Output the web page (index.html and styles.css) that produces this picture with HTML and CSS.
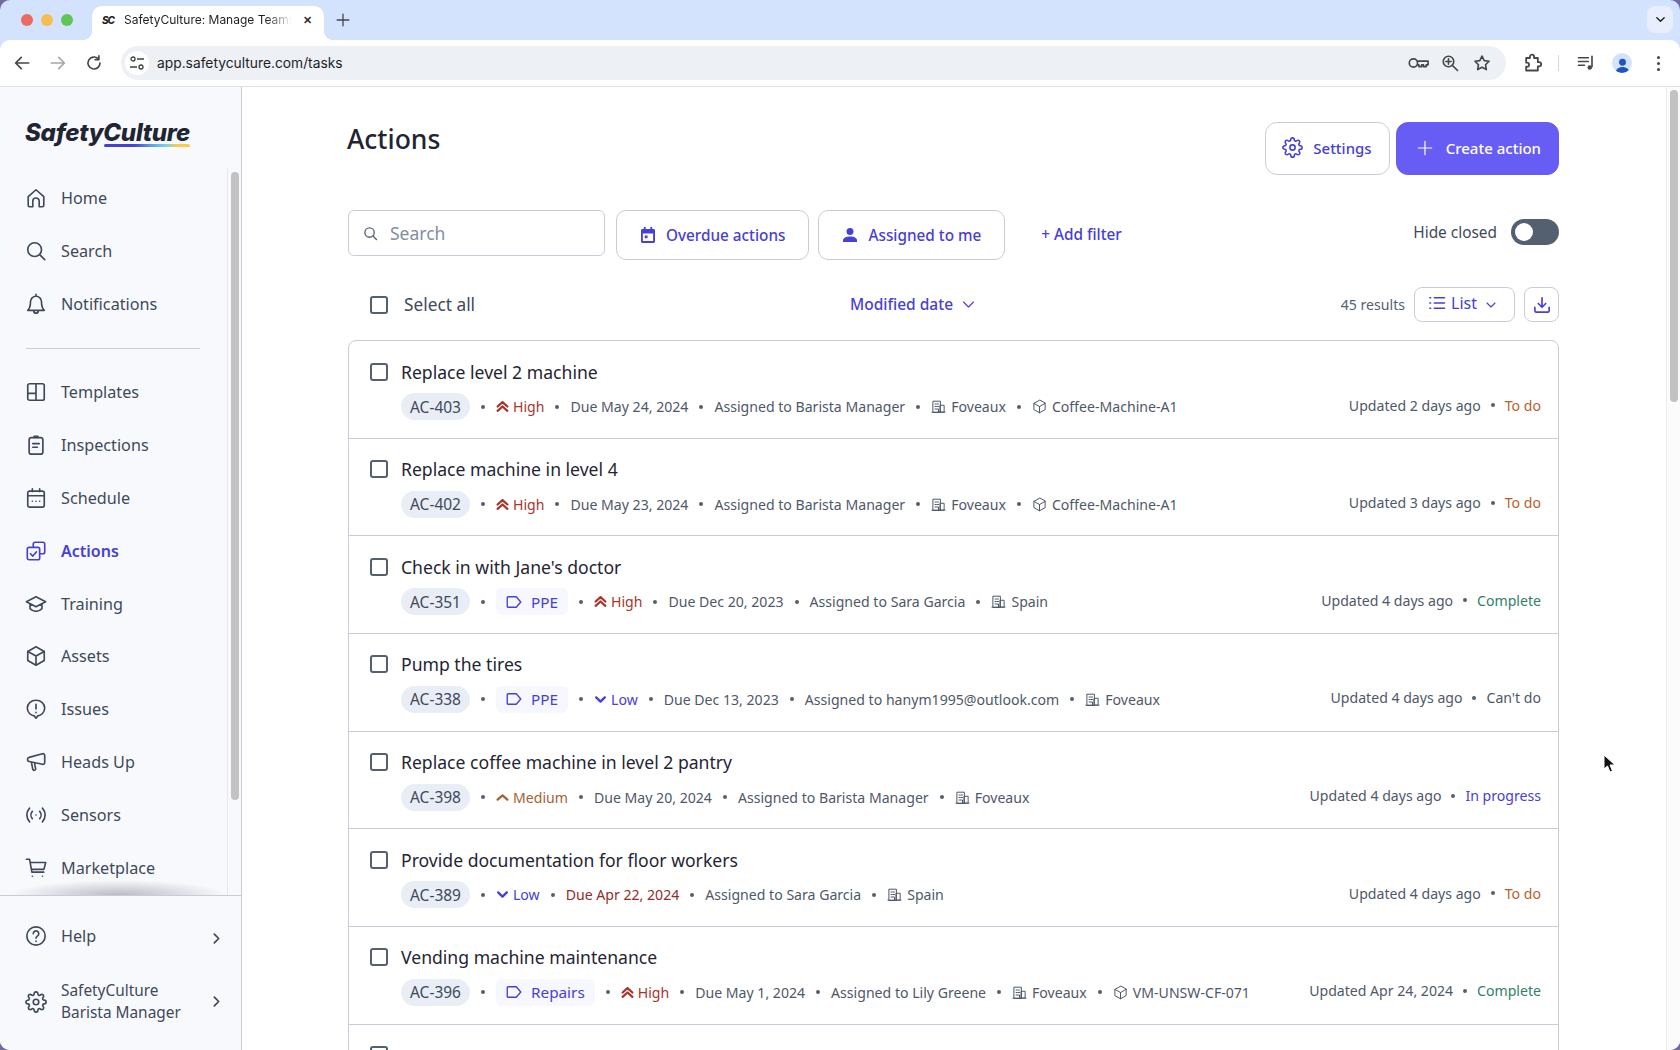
FILE: index.html
```html
<!DOCTYPE html>
<html lang="en">
<head>
    <meta charset="UTF-8">
    <title>SafetyCulture: Manage Teams</title>
    <link rel="stylesheet" href="styles.css">
</head>
<body>

    <!-- Icon sheet -->
    <svg class="sprite" width="0" height="0">
        <symbol id="i-home" viewBox="0 0 24 24"><path d="M3.5 10.5 12 3l8.5 7.5V20a1.5 1.5 0 0 1-1.5 1.5h-3.5v-6a3.5 3.5 0 0 0-7 0v6H5A1.5 1.5 0 0 1 3.5 20z"/></symbol>
        <symbol id="i-search" viewBox="0 0 24 24"><circle cx="10.5" cy="10.5" r="7.5"/><path d="M16 16l5.5 5.5"/></symbol>
        <symbol id="i-bell" viewBox="0 0 24 24"><path d="M12 3.5a6 6 0 0 0-6 6c0 4.5-1 7.5-3 9.5h18c-2-2-3-5-3-9.5a6 6 0 0 0-6-6zM12 1.5v2M9.5 19.5a2.5 2.5 0 0 0 5 0"/></symbol>
        <symbol id="i-templates" viewBox="0 0 24 24"><rect x="3" y="3" width="18" height="18" rx="2"/><path d="M12 3v18M3 13.5h9"/></symbol>
        <symbol id="i-clipboard" viewBox="0 0 24 24"><rect x="4.5" y="4" width="15" height="18" rx="2.5"/><path d="M10 4V2.5h4V4M8.5 10.5h7M8.5 14.5h5"/></symbol>
        <symbol id="i-calendar" viewBox="0 0 24 24"><rect x="3" y="4.5" width="18" height="17.5" rx="2"/><path d="M3 9.5h18M8 2v3M16 2v3M8 15.5h.01M12 15.5h.01M16 15.5h.01"/></symbol>
        <symbol id="i-actions" viewBox="0 0 24 24"><path d="M9 7.5V4.5a2 2 0 0 1 2-2h8.5a2 2 0 0 1 2 2V13a2 2 0 0 1-2 2H16"/><rect x="2.5" y="8" width="13.5" height="13.5" rx="2"/><path d="M6 15l2.5 2.5 4-4.5"/></symbol>
        <symbol id="i-training" viewBox="0 0 24 24"><path d="M12 4 1.5 9.5 12 15l10.5-5.5zM5.5 12v5c2 2 4.5 3 6.5 3s4.5-1 6.5-3v-5"/></symbol>
        <symbol id="i-box" viewBox="0 0 24 24"><path d="M12 2 3 7v10l9 5 9-5V7zM3 7l9 5 9-5M12 12v10"/></symbol>
        <symbol id="i-issue" viewBox="0 0 24 24"><path d="M12 2.5c5.5 0 9.5 3.7 9.5 8.5s-4 8-7.5 8.5L12 22l-2-2.5C6.5 19 2.5 15.8 2.5 11S6.5 2.5 12 2.5zM12 7v5M12 15.5v.5"/></symbol>
        <symbol id="i-megaphone" viewBox="0 0 24 24"><path d="M4.5 7 19 3c1.5-.3 2.5.6 2.5 2v7.5c0 1.4-1 2.3-2.5 2L4.5 11.5A2.3 2.3 0 0 1 4.5 7zM7 12.5l1.5 7.5a1.6 1.6 0 0 0 3.1-.7L10.5 14"/></symbol>
        <symbol id="i-sensor" viewBox="0 0 24 24"><path d="M8 8a6 6 0 0 0 0 8M16 8a6 6 0 0 1 0 8M5 4.5a11 11 0 0 0 0 15M19 4.5a11 11 0 0 1 0 15M12 12h.01"/></symbol>
        <symbol id="i-cart" viewBox="0 0 24 24"><path d="M1.5 2.5H5l2.5 14h13M5.6 6h17l-2 7.5H7M8 21h.01M19 21h.01"/></symbol>
        <symbol id="i-help" viewBox="0 0 24 24"><circle cx="12" cy="12" r="10"/><path d="M9 9.5a3 3 0 1 1 4.5 2.6c-1 .6-1.5 1.2-1.5 2.4M12 17.5v.5"/></symbol>
        <symbol id="i-gear" viewBox="0 0 24 24"><circle cx="12" cy="12" r="3"/><path d="M19.4 15a1.65 1.65 0 0 0 .33 1.82l.06.06a2 2 0 0 1 0 2.83 2 2 0 0 1-2.83 0l-.06-.06a1.65 1.65 0 0 0-1.82-.33 1.65 1.65 0 0 0-1 1.51V21a2 2 0 0 1-2 2 2 2 0 0 1-2-2v-.09A1.65 1.65 0 0 0 9 19.4a1.65 1.65 0 0 0-1.82.33l-.06.06a2 2 0 0 1-2.83 0 2 2 0 0 1 0-2.83l.06-.06a1.65 1.65 0 0 0 .33-1.82 1.65 1.65 0 0 0-1.51-1H3a2 2 0 0 1-2-2 2 2 0 0 1 2-2h.09A1.65 1.65 0 0 0 4.6 9a1.65 1.65 0 0 0-.33-1.82l-.06-.06a2 2 0 0 1 0-2.83 2 2 0 0 1 2.83 0l.06.06a1.65 1.65 0 0 0 1.82.33H9a1.65 1.65 0 0 0 1-1.51V3a2 2 0 0 1 2-2 2 2 0 0 1 2 2v.09a1.65 1.65 0 0 0 1 1.51 1.65 1.65 0 0 0 1.82-.33l.06-.06a2 2 0 0 1 2.83 0 2 2 0 0 1 0 2.83l-.06.06a1.65 1.65 0 0 0-.33 1.82V9a1.65 1.65 0 0 0 1.51 1H21a2 2 0 0 1 2 2 2 2 0 0 1-2 2h-.09a1.65 1.65 0 0 0-1.51 1z"/></symbol>
        <symbol id="i-right" viewBox="0 0 24 24"><path d="M8 4l8 8-8 8"/></symbol>
        <symbol id="i-down" viewBox="0 0 24 24"><path d="M4 8l8 8 8-8"/></symbol>
        <symbol id="i-up" viewBox="0 0 24 24"><path d="M3 16l9-8 9 8"/></symbol>
        <symbol id="i-upup" viewBox="0 0 24 24"><path d="M3 12l9-8 9 8M3 20l9-8 9 8"/></symbol>
        <symbol id="i-tag" viewBox="0 0 24 24"><path d="M3 6.5A1.5 1.5 0 0 1 4.5 5H15l6 7-6 7H4.5A1.5 1.5 0 0 1 3 17.5z"/></symbol>
        <symbol id="i-building" viewBox="0 0 24 24"><path d="M3 21V3.5h12V21zM15 10h6v11h-6zM1.5 21h21M6.5 8h2M10 8h2M6.5 12h2M10 12h2M6.5 16h5.5v5"/></symbol>
        <symbol id="i-list" viewBox="0 0 24 24"><path d="M8.5 5H22M8.5 12H22M8.5 19H22M2.5 5h1M2.5 12h1M2.5 19h1"/></symbol>
        <symbol id="i-download" viewBox="0 0 24 24"><path d="M12 2.5v12M7 10l5 5 5-5M2.5 15v4.5a2 2 0 0 0 2 2h15a2 2 0 0 0 2-2V15"/></symbol>
        <symbol id="i-plus" viewBox="0 0 24 24"><path d="M12 2v20M2 12h20"/></symbol>
        <symbol id="i-back" viewBox="0 0 24 24"><path d="M21 12H4M11 4.5 3.5 12l7.5 7.5"/></symbol>
        <symbol id="i-forward" viewBox="0 0 24 24"><path d="M3 12h17M13 4.5l7.5 7.5-7.5 7.5"/></symbol>
        <symbol id="i-reload" viewBox="0 0 24 24"><path d="M20 12a8 8 0 1 1-2.5-5.8M18.5 2.5v5h-5"/></symbol>
        <symbol id="i-key" viewBox="0 0 24 24"><circle cx="7" cy="12" r="4.5"/><path d="M11.5 10H23v4h-2v2h-3v-2h-2v2h-3v-2h-1.5"/></symbol>
        <symbol id="i-zoom" viewBox="0 0 24 24"><circle cx="10" cy="10" r="7"/><path d="M15 15l7 7M10 6.5v7M6.5 10h7"/></symbol>
        <symbol id="i-star" viewBox="0 0 24 24"><path d="M12 2.8l2.9 6 6.5.9-4.7 4.6 1.1 6.5-5.8-3.1-5.8 3.1 1.1-6.5-4.7-4.6 6.5-.9z"/></symbol>
        <symbol id="i-puzzle" viewBox="0 0 24 24"><path d="M5 6h4.5V4.5a2.5 2.5 0 0 1 5 0V6H19v5h1.5a2.5 2.5 0 0 1 0 5H19v5H5v-4.5h1a2.5 2.5 0 0 0 0-5H5z"/></symbol>
        <symbol id="i-media" viewBox="0 0 24 24"><path d="M2 5h13M2 10h13M2 15h8M20 3v14"/><circle class="solid" cx="17" cy="18" r="3"/></symbol>
    </svg>

    <div class="window">

        <!-- Browser tabs -->
        <div class="tabstrip">
            <div class="lights">
                <span class="light red"></span>
                <span class="light amber"></span>
                <span class="light green"></span>
            </div>
            <div class="tab">
                <span class="favicon">SC</span>
                <span class="tab-title">SafetyCulture: Manage Teams</span>
                <span class="tab-close">&#10005;</span>
            </div>
            <span class="new-tab"><svg class="icon thick" width="14" height="14"><use href="#i-plus"/></svg></span>
            <span class="tab-menu"><svg class="icon thicker" width="11" height="11"><use href="#i-down"/></svg></span>
        </div>

        <!-- Browser toolbar -->
        <div class="toolbar">
            <span class="tool"><svg class="icon thick" width="18" height="18"><use href="#i-back"/></svg></span>
            <span class="tool muted"><svg class="icon thick" width="18" height="18"><use href="#i-forward"/></svg></span>
            <span class="tool"><svg class="icon thick" width="18" height="18"><use href="#i-reload"/></svg></span>
            <div class="omnibox">
                <span class="site-info">
                    <svg width="14" height="14" viewBox="0 0 14 14" fill="none" stroke="#3c4043" stroke-width="1.3">
                        <circle cx="3" cy="3" r="2"/><path d="M7 3h7M0 11h7"/><circle cx="11" cy="11" r="2"/>
                    </svg>
                </span>
                <span class="url">app.safetyculture.com/tasks</span>
                <span class="omni-icons">
                    <span class="tool narrow"><svg class="icon" width="22" height="22"><use href="#i-key"/></svg></span>
                    <span class="tool narrow"><svg class="icon thick" width="18" height="18"><use href="#i-zoom"/></svg></span>
                    <span class="tool narrow"><svg class="icon thick" width="18" height="18"><use href="#i-star"/></svg></span>
                </span>
            </div>
            <span class="tool first"><svg class="icon thick" width="20" height="20"><use href="#i-puzzle"/></svg></span>
            <span class="tool-sep"></span>
            <span class="tool"><svg class="icon thick" width="18" height="18"><use href="#i-media"/></svg></span>
            <span class="tool">
                <span class="avatar">
                    <svg width="15" height="15" viewBox="0 0 14 14" fill="#1f55c0"><circle cx="7" cy="4" r="3.2"/><path d="M0.5 14c0-3.5 3-5.5 6.5-5.5s6.5 2 6.5 5.5z"/></svg>
                </span>
            </span>
            <span class="tool dots"><i></i><i></i><i></i></span>
        </div>

        <div class="app">

            <!-- Side navigation -->
            <aside class="sidebar">
                <div class="logo">
                    <span class="logo-text">SafetyCulture</span>
                    <span class="logo-line"></span>
                </div>
                <div class="side-scroll">
                    <nav class="nav">
                        <a class="nav-item"><svg class="icon" width="22" height="22"><use href="#i-home"/></svg>Home</a>
                        <a class="nav-item"><svg class="icon" width="22" height="22"><use href="#i-search"/></svg>Search</a>
                        <a class="nav-item"><svg class="icon" width="22" height="22"><use href="#i-bell"/></svg>Notifications</a>
                        <div class="nav-divider"></div>
                        <a class="nav-item"><svg class="icon" width="22" height="22"><use href="#i-templates"/></svg>Templates</a>
                        <a class="nav-item"><svg class="icon" width="22" height="22"><use href="#i-clipboard"/></svg>Inspections</a>
                        <a class="nav-item"><svg class="icon" width="22" height="22"><use href="#i-calendar"/></svg>Schedule</a>
                        <a class="nav-item active"><svg class="icon" width="22" height="22"><use href="#i-actions"/></svg>Actions</a>
                        <a class="nav-item"><svg class="icon" width="22" height="22"><use href="#i-training"/></svg>Training</a>
                        <a class="nav-item"><svg class="icon" width="22" height="22"><use href="#i-box"/></svg>Assets</a>
                        <a class="nav-item"><svg class="icon" width="22" height="22"><use href="#i-issue"/></svg>Issues</a>
                        <a class="nav-item"><svg class="icon" width="22" height="22"><use href="#i-megaphone"/></svg>Heads Up</a>
                        <a class="nav-item"><svg class="icon" width="22" height="22"><use href="#i-sensor"/></svg>Sensors</a>
                        <a class="nav-item"><svg class="icon" width="22" height="22"><use href="#i-cart"/></svg>Marketplace</a>
                    </nav>
                    <div class="side-track"><div class="side-thumb"></div></div>
                    <div class="side-shadow"></div>
                </div>
                <div class="side-bottom">
                    <a class="nav-item"><svg class="icon" width="22" height="22"><use href="#i-help"/></svg><span class="grow">Help</span><svg class="icon thicker nudge" width="13" height="13"><use href="#i-right"/></svg></a>
                    <a class="nav-item two-line"><svg class="icon" width="22" height="22"><use href="#i-gear"/></svg><span class="grow">SafetyCulture<br>Barista Manager</span><svg class="icon thicker" width="13" height="13"><use href="#i-right"/></svg></a>
                </div>
            </aside>

            <main class="main">
                <div class="content">

                    <div class="page-head">
                        <h1>Actions</h1>
                        <div class="head-buttons">
                            <button class="btn"><svg class="icon" width="21" height="21"><use href="#i-gear"/></svg>Settings</button>
                            <button class="btn primary"><svg class="icon" width="16" height="16"><use href="#i-plus"/></svg>Create action</button>
                        </div>
                    </div>

                    <div class="filters">
                        <div class="search-box"><svg class="icon thick" width="15" height="15"><use href="#i-search"/></svg><span>Search</span></div>
                        <button class="chip">
                            <svg width="14" height="16" viewBox="0 0 15 17" fill="#4740d4"><path d="M1.5 2H3V0h2v2h5V0h2v2h1.5A1.5 1.5 0 0 1 15 3.5v12a1.5 1.5 0 0 1-1.5 1.5h-12A1.5 1.5 0 0 1 0 15.5v-12A1.5 1.5 0 0 1 1.5 2zM2 7v8h11V7z"/><rect x="4" y="9" width="3" height="3"/></svg>
                            Overdue actions
                        </button>
                        <button class="chip">
                            <svg width="14" height="14" viewBox="0 0 14 14" fill="#4740d4"><circle cx="7" cy="3.5" r="3.5"/><path d="M0 14v-1.5C0 10 3 8.5 7 8.5s7 1.5 7 4V14z"/></svg>
                            Assigned to me
                        </button>
                        <a class="add-filter">+ Add filter</a>
                        <div class="hide-closed">
                            <span>Hide closed</span>
                            <span class="toggle"><span class="knob"></span></span>
                        </div>
                    </div>

                    <div class="list-tools">
                        <label class="select-all"><span class="check"></span>Select all</label>
                        <a class="sort">Modified date <svg class="icon" width="15" height="15"><use href="#i-down"/></svg></a>
                        <span class="count">45 results</span>
                        <button class="btn-small list-btn">
                            <svg class="icon thick" width="18" height="18"><use href="#i-list"/></svg>List
                            <svg class="icon thick chev" width="12" height="12"><use href="#i-down"/></svg>
                        </button>
                        <button class="btn-small dl-btn"><svg class="icon thick" width="18" height="18"><use href="#i-download"/></svg></button>
                    </div>

                    <div class="action-list">

                        <div class="row">
                            <div class="row-top"><span class="check"></span><span class="row-title">Replace level 2 machine</span></div>
                            <div class="row-meta">
                                <span class="pill">AC-403</span><i class="sep"></i>
                                <span class="prio high"><svg class="icon" width="13" height="13"><use href="#i-upup"/></svg>High</span><i class="sep"></i>
                                <span>Due May 24, 2024</span><i class="sep"></i>
                                <span>Assigned to Barista Manager</span><i class="sep"></i>
                                <span class="with-icon"><svg class="icon" width="15" height="15"><use href="#i-building"/></svg>Foveaux</span><i class="sep"></i>
                                <span class="with-icon"><svg class="icon" width="15" height="15"><use href="#i-box"/></svg>Coffee-Machine-A1</span>
                                <span class="row-status">Updated 2 days ago<i class="sep small"></i><span class="st-todo">To do</span></span>
                            </div>
                        </div>

                        <div class="row">
                            <div class="row-top"><span class="check"></span><span class="row-title">Replace machine in level 4</span></div>
                            <div class="row-meta">
                                <span class="pill">AC-402</span><i class="sep"></i>
                                <span class="prio high"><svg class="icon" width="13" height="13"><use href="#i-upup"/></svg>High</span><i class="sep"></i>
                                <span>Due May 23, 2024</span><i class="sep"></i>
                                <span>Assigned to Barista Manager</span><i class="sep"></i>
                                <span class="with-icon"><svg class="icon" width="15" height="15"><use href="#i-building"/></svg>Foveaux</span><i class="sep"></i>
                                <span class="with-icon"><svg class="icon" width="15" height="15"><use href="#i-box"/></svg>Coffee-Machine-A1</span>
                                <span class="row-status">Updated 3 days ago<i class="sep small"></i><span class="st-todo">To do</span></span>
                            </div>
                        </div>

                        <div class="row">
                            <div class="row-top"><span class="check"></span><span class="row-title">Check in with Jane's doctor</span></div>
                            <div class="row-meta">
                                <span class="pill">AC-351</span><i class="sep"></i>
                                <span class="label"><svg class="icon" width="18" height="18"><use href="#i-tag"/></svg>PPE</span><i class="sep"></i>
                                <span class="prio high"><svg class="icon" width="13" height="13"><use href="#i-upup"/></svg>High</span><i class="sep"></i>
                                <span>Due Dec 20, 2023</span><i class="sep"></i>
                                <span>Assigned to Sara Garcia</span><i class="sep"></i>
                                <span class="with-icon"><svg class="icon" width="15" height="15"><use href="#i-building"/></svg>Spain</span>
                                <span class="row-status">Updated 4 days ago<i class="sep small"></i><span class="st-done">Complete</span></span>
                            </div>
                        </div>

                        <div class="row">
                            <div class="row-top"><span class="check"></span><span class="row-title">Pump the tires</span></div>
                            <div class="row-meta">
                                <span class="pill">AC-338</span><i class="sep"></i>
                                <span class="label"><svg class="icon" width="18" height="18"><use href="#i-tag"/></svg>PPE</span><i class="sep"></i>
                                <span class="prio low"><svg class="icon" width="13" height="13"><use href="#i-down"/></svg>Low</span><i class="sep"></i>
                                <span>Due Dec 13, 2023</span><i class="sep"></i>
                                <span>Assigned to hanym1995@outlook.com</span><i class="sep"></i>
                                <span class="with-icon"><svg class="icon" width="15" height="15"><use href="#i-building"/></svg>Foveaux</span>
                                <span class="row-status">Updated 4 days ago<i class="sep small"></i><span>Can't do</span></span>
                            </div>
                        </div>

                        <div class="row">
                            <div class="row-top"><span class="check"></span><span class="row-title">Replace coffee machine in level 2 pantry</span></div>
                            <div class="row-meta">
                                <span class="pill">AC-398</span><i class="sep"></i>
                                <span class="prio medium"><svg class="icon" width="13" height="13"><use href="#i-up"/></svg>Medium</span><i class="sep"></i>
                                <span>Due May 20, 2024</span><i class="sep"></i>
                                <span>Assigned to Barista Manager</span><i class="sep"></i>
                                <span class="with-icon"><svg class="icon" width="15" height="15"><use href="#i-building"/></svg>Foveaux</span>
                                <span class="row-status">Updated 4 days ago<i class="sep small"></i><span class="st-progress">In progress</span></span>
                            </div>
                        </div>

                        <div class="row">
                            <div class="row-top"><span class="check"></span><span class="row-title">Provide documentation for floor workers</span></div>
                            <div class="row-meta">
                                <span class="pill">AC-389</span><i class="sep"></i>
                                <span class="prio low"><svg class="icon" width="13" height="13"><use href="#i-down"/></svg>Low</span><i class="sep"></i>
                                <span class="overdue">Due Apr 22, 2024</span><i class="sep"></i>
                                <span>Assigned to Sara Garcia</span><i class="sep"></i>
                                <span class="with-icon"><svg class="icon" width="15" height="15"><use href="#i-building"/></svg>Spain</span>
                                <span class="row-status">Updated 4 days ago<i class="sep small"></i><span class="st-todo">To do</span></span>
                            </div>
                        </div>

                        <div class="row">
                            <div class="row-top"><span class="check"></span><span class="row-title">Vending machine maintenance</span></div>
                            <div class="row-meta">
                                <span class="pill">AC-396</span><i class="sep"></i>
                                <span class="label"><svg class="icon" width="18" height="18"><use href="#i-tag"/></svg>Repairs</span><i class="sep"></i>
                                <span class="prio high"><svg class="icon" width="13" height="13"><use href="#i-upup"/></svg>High</span><i class="sep"></i>
                                <span>Due May 1, 2024</span><i class="sep"></i>
                                <span>Assigned to Lily Greene</span><i class="sep"></i>
                                <span class="with-icon"><svg class="icon" width="15" height="15"><use href="#i-building"/></svg>Foveaux</span><i class="sep"></i>
                                <span class="with-icon"><svg class="icon" width="15" height="15"><use href="#i-box"/></svg>VM-UNSW-CF-071</span>
                                <span class="row-status">Updated Apr 24, 2024<i class="sep small"></i><span class="st-done">Complete</span></span>
                            </div>
                        </div>

                        <!-- Next row starts at the fold, its title is below the edge -->
                        <div class="row">
                            <div class="row-top"><span class="check"></span></div>
                        </div>

                    </div>
                </div>

                <div class="page-track"><div class="page-thumb"></div></div>
            </main>
        </div>

        <!-- Mouse pointer in the capture -->
        <svg class="cursor" width="13" height="19" viewBox="0 0 13 19"><path d="M1 1v14l3.5-3 2.5 6 2.5-1-2.5-6H12z" fill="#111" stroke="#fff" stroke-width="1"/></svg>
    </div>

</body>
</html>
```
FILE: styles.css
```css
html, body {
    margin: 0;
    height: 100%;
    background: #6f6a9f;
    overflow: hidden;
}
body {
    font-family: "Noto Sans", sans-serif;
    font-size: 16px;
    color: #3f495a;
}
.sprite {
    position: absolute;
}
.icon {
    fill: none;
    stroke: currentColor;
    stroke-width: 1.8;
    stroke-linecap: round;
    stroke-linejoin: round;
    flex: none;
}
.icon.thick {
    stroke-width: 2.2;
}
.icon.thicker {
    stroke-width: 3.2;
}
.solid {
    fill: currentColor;
    stroke: none;
}
.window {
    position: relative;
    height: 1050px;
    display: flex;
    flex-direction: column;
    border-radius: 10px;
    overflow: hidden;
    background: #d3e3fd;
}

/* browser chrome */
.tabstrip {
    height: 40px;
    display: flex;
    align-items: flex-start;
    font-family: Inter, sans-serif;
    flex: none;
}
.lights {
    display: flex;
    gap: 8px;
    padding: 14px 19px 0 21px;
}
.light {
    width: 12px;
    height: 12px;
    border-radius: 50%;
}
.red { background: #ec6a5e; }
.amber { background: #f4bf4f; }
.green { background: #61c554; }
.tab {
    position: relative;
    width: 232px;
    height: 34px;
    margin-top: 6px;
    background: #fff;
    border-radius: 10px 10px 0 0;
    display: flex;
    align-items: flex-start;
    box-sizing: border-box;
    padding: 6px 10px 0 10px;
    font-size: 12px;
    line-height: 16px;
    color: #1f1f1f;
}
.tab::before, .tab::after {
    content: "";
    position: absolute;
    bottom: 0;
    width: 10px;
    height: 10px;
}
.tab::before {
    left: -10px;
    background: radial-gradient(circle at 0 0, transparent 10px, #fff 10.5px);
}
.tab::after {
    right: -10px;
    background: radial-gradient(circle at 100% 0, transparent 10px, #fff 10.5px);
}
.favicon {
    width: 22px;
    font-size: 10px;
    font-weight: 800;
    letter-spacing: -1px;
    font-style: italic;
}
.tab-title {
    width: 168px;
    margin-right: 11px;
    white-space: nowrap;
    overflow: hidden;
    -webkit-mask-image: linear-gradient(to right, #000 85%, transparent);
    mask-image: linear-gradient(to right, #000 85%, transparent);
}
.tab-close {
    font-size: 11px;
    font-weight: 700;
    color: #333;
}
.new-tab {
    margin: 11px 0 0 12px;
    color: #444;
}
.tab-menu {
    margin: 6px 7px 0 auto;
    width: 26px;
    height: 27px;
    background: #e8eefb;
    border-radius: 8px;
    display: flex;
    align-items: center;
    justify-content: center;
    color: #222;
}
.toolbar {
    height: 46px;
    flex: none;
    background: #fff;
    border-radius: 10px 10px 0 0;
    border-bottom: 1px solid #dfe1e5;
    display: flex;
    align-items: center;
    padding: 0 4px;
    color: #474747;
    font-family: Inter, sans-serif;
}
.tool {
    width: 36px;
    height: 34px;
    flex: none;
    display: flex;
    align-items: center;
    justify-content: center;
}
.tool.muted {
    color: #a8a8a8;
}
.tool.narrow {
    width: 32px;
}
.tool.first {
    margin-left: 8px;
}
.tool-sep {
    width: 1px;
    height: 16px;
    margin: 0 9px 0 8px;
    background: #c9d7f0;
}
.omnibox {
    flex: 1;
    height: 34px;
    margin-left: 9px;
    background: #edf0f5;
    border-radius: 17px;
    display: flex;
    align-items: center;
    padding: 0 8px 0 4px;
}
.site-info {
    width: 24px;
    height: 24px;
    border-radius: 50%;
    background: #fff;
    display: flex;
    align-items: center;
    justify-content: center;
}
.url {
    margin-left: 8px;
    font-size: 13.8px;
    line-height: 16px;
    margin-top: -1px;
    color: #1f1f1f;
}
.omni-icons {
    margin-left: auto;
    display: flex;
}
.avatar {
    width: 20px;
    height: 20px;
    border-radius: 50%;
    background: #d3e3fd;
    overflow: hidden;
    display: flex;
    align-items: flex-end;
    justify-content: center;
}
.dots {
    flex-direction: column;
    gap: 3px;
}
.dots i {
    width: 3px;
    height: 3px;
    border-radius: 50%;
    background: #474747;
}

/* app shell */
.app {
    flex: 1;
    min-height: 0;
    display: flex;
    background: #fff;
}
.sidebar {
    width: 241px;
    flex: none;
    background: #f8f9fc;
    border-right: 1px solid #c9ccd8;
    display: flex;
    flex-direction: column;
    min-height: 0;
}
.logo {
    height: 81px;
    flex: none;
    padding: 34px 0 0 25px;
    box-sizing: border-box;
    position: relative;
    font-family: Inter, sans-serif;
}
.logo-text {
    display: block;
    font-size: 24px;
    line-height: 24px;
    font-weight: 800;
    font-style: italic;
    letter-spacing: -0.25px;
    color: #1f2533;
}
.logo-line {
    position: absolute;
    left: 104px;
    top: 57px;
    width: 86px;
    height: 3px;
    border-radius: 2px;
    background: linear-gradient(to right, #4740d4 0 35%, #56a4e8 55%, #7ed3e8 72%, #fbcb4a 85%);
}
.side-scroll {
    flex: 1;
    min-height: 0;
    display: flex;
    position: relative;
    border-bottom: 1px solid #c9ccd8;
}
.nav {
    flex: 1;
    min-width: 0;
    padding-top: 4px;
    overflow: hidden;
}
.nav-item {
    height: 52.8px;
    display: flex;
    align-items: center;
    gap: 14px;
    padding-left: 25px;
    color: #3f495a;
    font-size: 16.2px;
}
.nav-item.active {
    color: #4740d4;
    font-weight: 600;
    font-size: 16px;
}
.nav-divider {
    height: 1px;
    margin: 17.6px 0 17px 26px;
    width: 174px;
    background: #c9ccd8;
}
.side-track {
    width: 14px;
    flex: none;
    border-left: 1px solid #e6e8ee;
    padding: 4px 0 0 3px;
    box-sizing: border-box;
}
.side-thumb {
    width: 8px;
    height: 628px;
    border-radius: 4px;
    background: #c2c2c2;
}
.side-shadow {
    position: absolute;
    left: 10px;
    right: 14px;
    bottom: 0;
    height: 15px;
    background: radial-gradient(ellipse 50% 100% at 50% 100%, rgba(90, 95, 110, 0.4), transparent);
}
.side-bottom {
    height: 154px;
    flex: none;
    padding-top: 14px;
    box-sizing: border-box;
}
.side-bottom .nav-item {
    padding-right: 18px;
}
.nav-item.two-line {
    height: 64px;
    font-size: 15.4px;
    line-height: 21.5px;
    margin-top: 7px;
}
.grow {
    flex: 1;
}
.nudge {
    margin-top: 4px;
}

/* main column */
.main {
    flex: 1;
    min-width: 0;
    display: flex;
}
.content {
    flex: 1;
    min-width: 0;
    padding: 35px 107px 0 106px;
    overflow: hidden;
}
.page-head {
    height: 53px;
    display: flex;
    justify-content: space-between;
}
h1 {
    margin: 0 0 0 -1px;
    font-size: 26.5px;
    line-height: 34px;
    font-weight: 500;
    color: #1f2533;
}
.head-buttons {
    display: flex;
    gap: 6px;
}
button {
    font-family: inherit;
    font-size: 15.3px;
    font-weight: 500;
    color: #4740d4;
    background: #fff;
    border: 1px solid #c9ccd8;
    cursor: pointer;
}
.btn {
    height: 53px;
    display: flex;
    align-items: center;
    gap: 10px;
    padding: 0 17px 2px 16px;
    border-radius: 12px;
    font-size: 15px;
}
.btn.primary {
    background: #675df4;
    border-color: #675df4;
    color: #fff;
    gap: 13px;
    padding: 0 17px 2px 20px;
}
.filters {
    display: flex;
    align-items: flex-start;
    margin-top: 35px;
    height: 50px;
}
.search-box {
    width: 257px;
    height: 46px;
    box-sizing: border-box;
    border: 1px solid #c9ccd8;
    border-radius: 6px;
    display: flex;
    align-items: center;
    gap: 12px;
    padding-left: 14px;
    color: #5c6575;
    font-size: 17.5px;
}
.search-box span {
    color: #828ea0;
}
.chip {
    height: 50px;
    display: flex;
    align-items: center;
    gap: 11px;
    margin-left: 11px;
    padding: 0 23px 1px 24px;
    border-radius: 10px;
}
.chip + .chip {
    margin-left: 9px;
}
.add-filter {
    margin: 14px 0 0 36px;
    color: #4740d4;
    font-size: 15.3px;
    font-weight: 500;
}
.hide-closed {
    margin: 9px 0 0 auto;
    display: flex;
    align-items: center;
    gap: 14px;
    font-size: 15.4px;
}
.toggle {
    width: 48px;
    height: 26px;
    border-radius: 13px;
    background: #545f70;
    display: flex;
    align-items: center;
    padding-left: 4px;
    box-sizing: border-box;
}
.knob {
    width: 18px;
    height: 18px;
    border-radius: 50%;
    background: #fff;
}
.list-tools {
    margin-top: 27px;
    height: 35px;
    display: flex;
    align-items: center;
}
.check {
    width: 18px;
    height: 18px;
    flex: none;
    box-sizing: border-box;
    border: 2px solid #545f70;
    border-radius: 3px;
    background: #fff;
}
.select-all {
    width: 502px;
    flex: none;
    box-sizing: border-box;
    padding-left: 22px;
    display: flex;
    align-items: center;
    gap: 16px;
    font-size: 17.3px;
}
.sort {
    display: flex;
    align-items: center;
    gap: 8px;
    padding-bottom: 1px;
    color: #4740d4;
    font-size: 15.5px;
    font-weight: 500;
}
.count {
    margin-left: auto;
    font-size: 14.1px;
    color: #545f70;
}
.btn-small {
    height: 35px;
    border-radius: 8px;
    display: flex;
    align-items: center;
    justify-content: center;
    padding: 0;
    font-size: 16px;
    font-weight: 400;
}
.list-btn {
    width: 101px;
    margin: 0 9px;
    padding-right: 4px;
    padding-bottom: 3px;
    gap: 5px;
}
.list-btn .chev {
    margin: 3px 0 0 3px;
}
.dl-btn {
    width: 35px;
}

/* action rows */
.action-list {
    margin-top: 18px;
    border: 1px solid #c9ccd8;
    border-radius: 8px;
    overflow: hidden;
}
.row {
    height: 97.67px;
    box-sizing: border-box;
    border-bottom: 1px solid #c9ccd8;
    padding: 18.5px 17px 0 21px;
}
.row-top {
    height: 24px;
    display: flex;
    align-items: center;
    gap: 13px;
}
.row-title {
    font-size: 17.6px;
    color: #1f2533;
}
.row-meta {
    height: 27px;
    margin: 9.5px 0 0 31px;
    display: flex;
    align-items: center;
    font-size: 14.1px;
    color: #4f5868;
    white-space: nowrap;
}
.pill {
    height: 27px;
    padding: 0 9px;
    border-radius: 14px;
    background: #e9edf6;
    color: #3f495a;
    font-size: 15.5px;
    display: flex;
    align-items: center;
}
.sep {
    width: 26px;
    flex: none;
    display: flex;
    justify-content: center;
}
.sep::before {
    content: "";
    width: 4px;
    height: 4px;
    border-radius: 50%;
    background: #545f70;
}
.sep.small {
    width: 24px;
}
.prio, .with-icon {
    display: flex;
    align-items: center;
    gap: 4px;
}
.prio .icon {
    stroke-width: 4.2;
}
.with-icon {
    gap: 5px;
}
.with-icon .icon {
    stroke-width: 1.6;
}
.high { color: #a8352d; }
.medium { color: #a66232; }
.low { color: #4740d4; }
.overdue { color: #8f2d2a; }
.label {
    height: 27px;
    padding: 0 10px 0 9px;
    border-radius: 6px;
    background: #f6f7ff;
    color: #4740d4;
    font-size: 15.3px;
    display: flex;
    align-items: center;
    gap: 8px;
}
.row-status {
    margin: -3px 0 0 auto;
    display: flex;
    align-items: center;
}
.st-todo { color: #b8622b; }
.st-done { color: #2f7f6a; }
.st-progress { color: #4740d4; }
.page-track {
    width: 14px;
    flex: none;
    background: #fbfbfb;
    border-left: 1px solid #ececec;
    padding: 3px 0 0 3px;
    box-sizing: border-box;
}
.page-thumb {
    width: 8px;
    height: 312px;
    border-radius: 4px;
    background: #c2c2c2;
}
.cursor {
    position: absolute;
    left: 1603px;
    top: 754px;
}
```
